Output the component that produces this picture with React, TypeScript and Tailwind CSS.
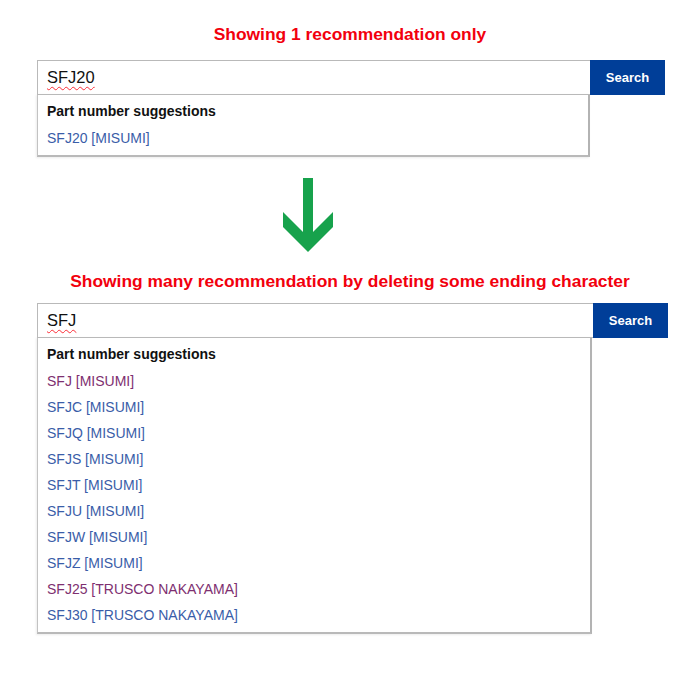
const font = { fontFamily: '"Liberation Sans", Arial, sans-serif' };

type Suggestion = { label: string; visited?: boolean };

const many: Suggestion[] = [
  { label: "SFJ [MISUMI]", visited: true },
  { label: "SFJC [MISUMI]" },
  { label: "SFJQ [MISUMI]" },
  { label: "SFJS [MISUMI]" },
  { label: "SFJT [MISUMI]" },
  { label: "SFJU [MISUMI]" },
  { label: "SFJW [MISUMI]" },
  { label: "SFJZ [MISUMI]" },
  { label: "SFJ25 [TRUSCO NAKAYAMA]", visited: true },
  { label: "SFJ30 [TRUSCO NAKAYAMA]" },
];

function SearchBox({
  query,
  inputWidth,
  dropWidth,
  items,
}: {
  query: string;
  inputWidth: string;
  dropWidth: string;
  items: Suggestion[];
}) {
  return (
    <div className="ml-[37px]">
      <div className="flex">
        <div className={`${inputWidth} flex h-[35px] items-center border border-r-0 border-[#b9b9b9] pl-[9px]`}>
          <span className="text-[16.5px] text-[#111] underline decoration-red-500 decoration-wavy decoration-1 underline-offset-[3px]">
            {query}
          </span>
        </div>
        <button className="h-[35px] w-[75px] bg-[#003e98] text-[13px] font-bold text-white">Search</button>
      </div>
      <div className={`${dropWidth} -mt-px border border-[#c2c2c2] border-r-2 border-r-[#b3b3b3] border-b-2 border-b-[#b9b9b9] pt-[3px] pb-[4px] shadow-[-1px_1px_2px_rgba(0,0,0,0.08)]`}>
        <div className="flex h-[27px] items-center pl-[9px] text-[14px] font-bold text-[#111]">
          Part number suggestions
        </div>
        {items.map((item) => (
          <div
            key={item.label}
            className={`flex h-[26px] items-center pl-[9px] text-[14px] ${item.visited ? "text-[#7e2f70]" : "text-[#3a5da8]"}`}
          >
            {item.label}
          </div>
        ))}
      </div>
    </div>
  );
}

export default function App() {
  return (
    <div className="h-[690px] w-[700px] overflow-hidden bg-white" style={font}>
      <h1 className="mt-[24px] h-[20px] text-center text-[17.4px] leading-[20px] font-bold text-[#f2000d]">
        Showing 1 recommendation only
      </h1>

      <div className="mt-[16px]">
        <SearchBox query="SFJ20" inputWidth="w-[553px]" dropWidth="w-[553px]" items={[{ label: "SFJ20 [MISUMI]" }]} />
      </div>

      <svg className="mt-[21px] ml-[283px] block" width="51" height="74" viewBox="0 0 51 74">
        <polygon fill="#17a24c" points="20,0 30,0 30,54 50,34 50,49 25,74 0,49 0,34 20,54" />
      </svg>

      <h2 className="mt-[19px] h-[20px] text-center text-[17.4px] leading-[20px] font-bold text-[#f2000d]">
        Showing many recommendation by deleting some ending character
      </h2>

      <div className="mt-[12px]">
        <SearchBox query="SFJ" inputWidth="w-[556px]" dropWidth="w-[555px]" items={many} />
      </div>
    </div>
  );
}
